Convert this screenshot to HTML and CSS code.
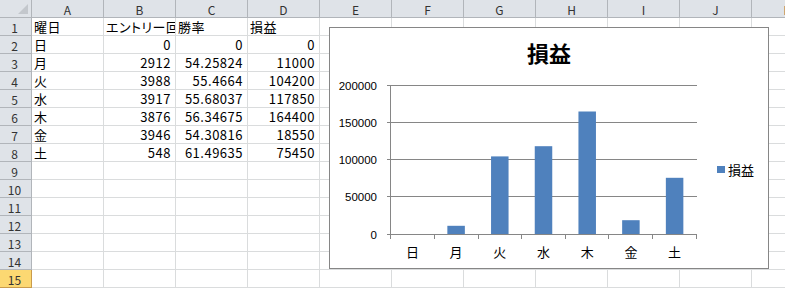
FILE: index.html
```html
<!DOCTYPE html>
<html lang="ja">
  <head>
    <meta charset="UTF-8" />
    <meta name="viewport" content="width=device-width, initial-scale=1.0" />
    <title>損益</title>
    <link rel="stylesheet" href="styles.css">
  </head>
  <body>
    <div class="sheet" id="sheet"></div>

    <div class="chart">
      <div class="chart-title">損益</div>
      <div class="chart-body">
        <svg class="plot" width="375" height="202" viewBox="0 0 375 202">
          <g class="grid">
            <line x1="57" y1="20.5" x2="367" y2="20.5" />
            <line x1="57" y1="57.5" x2="367" y2="57.5" />
            <line x1="57" y1="94.5" x2="367" y2="94.5" />
            <line x1="57" y1="131.5" x2="367" y2="131.5" />
          </g>
          <g class="axis-y">
            <text x="47" y="25">200000</text>
            <text x="47" y="62">150000</text>
            <text x="47" y="99">100000</text>
            <text x="47" y="136">50000</text>
            <text x="47" y="173.5">0</text>
          </g>
          <g class="bars">
            <rect x="117.35" y="160.8" width="17.5" height="8.2" />
            <rect x="161.05" y="91.4" width="17.5" height="77.6" />
            <rect x="204.75" y="81.2" width="17.5" height="87.8" />
            <rect x="248.45" y="46.5" width="17.5" height="122.5" />
            <rect x="292.15" y="155.2" width="17.5" height="13.8" />
            <rect x="335.85" y="112.8" width="17.5" height="56.2" />
          </g>
          <g class="axis">
            <line x1="57" y1="169.5" x2="367" y2="169.5" />
            <line x1="60.5" y1="20" x2="60.5" y2="174" />
            <line x1="104.5" y1="169" x2="104.5" y2="174" />
            <line x1="148.5" y1="169" x2="148.5" y2="174" />
            <line x1="191.5" y1="169" x2="191.5" y2="174" />
            <line x1="235.5" y1="169" x2="235.5" y2="174" />
            <line x1="278.5" y1="169" x2="278.5" y2="174" />
            <line x1="322.5" y1="169" x2="322.5" y2="174" />
            <line x1="366.5" y1="169" x2="366.5" y2="174" />
          </g>
          <g class="axis-x">
            <text x="82.4" y="191.5">日</text>
            <text x="126.1" y="191.5">月</text>
            <text x="169.8" y="191.5">火</text>
            <text x="213.5" y="191.5">水</text>
            <text x="257.2" y="191.5">木</text>
            <text x="300.9" y="191.5">金</text>
            <text x="344.6" y="191.5">土</text>
          </g>
        </svg>
        <div class="legend">
          <span class="legend-key"></span>損益
        </div>
      </div>
    </div>

    <script>
      // 表のデータ（1行目は見出し）
      const rows = [
        ["曜日", "エントリー回数", "勝率", "損益"],
        ["日", 0, 0, 0],
        ["月", 2912, 54.25824, 11000],
        ["火", 3988, 55.4664, 104200],
        ["水", 3917, 55.68037, 117850],
        ["木", 3876, 56.34675, 164400],
        ["金", 3946, 54.30816, 18550],
        ["土", 548, 61.49635, 75450],
      ];
      const columns = ["A", "B", "C", "D", "E", "F", "G", "H", "I", "J", "K"];
      const rowCount = 15;
      const activeRow = 15;

      const sheet = document.querySelector("#sheet");
      let html = `<div class="head corner"></div>`;
      columns.forEach((col) => {
        html += `<div class="head col-head">${col}</div>`;
      });

      for (let r = 1; r <= rowCount; r++) {
        const cls = r === activeRow ? "head row-head active" : "head row-head";
        html += `<div class="${cls}">${r}</div>`;
        const data = rows[r - 1] || [];
        columns.forEach((col, c) => {
          const value = data[c];
          if (value === undefined) {
            html += `<div class="cell"></div>`;
          } else if (typeof value === "number") {
            html += `<div class="cell num">${value}</div>`;
          } else {
            html += `<div class="cell">${value}</div>`;
          }
        });
      }
      sheet.innerHTML = html;
    </script>
  </body>
</html>
```

FILE: styles.css
```css
body {
  margin: 0;
  width: 785px;
  height: 288px;
  overflow: hidden;
  position: relative;
  background-color: white;
  font-family: "Noto Sans CJK JP", "Noto Sans", sans-serif;
  color: #000;
}

.sheet {
  display: grid;
  grid-template-columns: 32px repeat(11, 72px);
  grid-auto-rows: 18px;
}

.cell,
.head {
  box-sizing: border-box;
  overflow: hidden;
  white-space: nowrap;
}

.cell {
  border-right: 1px solid #dadcdd;
  border-bottom: 1px solid #dadcdd;
  padding: 0 2px;
  font-size: 13px;
  line-height: 17px;
  letter-spacing: 0.5px;
  font-feature-settings: "palt";
}

.cell.num {
  text-align: right;
  padding-right: 4px;
}

.head {
  background-color: #dfe3e8;
  border-right: 1px solid #b1b5ba;
  border-bottom: 1px solid #b1b5ba;
  color: #333;
  font-size: 12px;
  line-height: 15px;
  padding-top: 2px;
  text-align: center;
}

.row-head {
  padding-right: 2px;
}

.row-head.active {
  background-color: #fcd872;
  border-color: #c99b4c;
  border-right: 1px solid #c99b4c;
}

.corner {
  position: relative;
}

.corner::after {
  content: "";
  position: absolute;
  right: 3px;
  bottom: 3px;
  width: 10px;
  height: 10px;
  background-color: #c3c7cc;
  clip-path: polygon(100% 0, 100% 100%, 0 100%);
}

.chart {
  position: absolute;
  left: 329px;
  top: 27px;
  width: 440px;
  height: 242px;
  box-sizing: border-box;
  border: 1px solid #868686;
  background-color: white;
}

.chart-title {
  padding-top: 12px;
  line-height: 25px;
  font-size: 22px;
  font-weight: bold;
  text-align: center;
}

.chart-body {
  display: flex;
}

.plot {
  display: block;
  flex: none;
}

.plot line {
  stroke: #868686;
  stroke-width: 1;
}

.plot .bars rect {
  fill: #4f81bd;
}

.axis-y text {
  font-family: "Liberation Sans", Arial, sans-serif;
  font-size: 11.5px;
  text-anchor: end;
}

.axis-x text {
  font-size: 13px;
  text-anchor: middle;
}

.legend {
  display: flex;
  align-items: center;
  margin-top: 96px;
  padding-left: 12px;
  height: 16px;
  font-size: 13px;
}

.legend-key {
  width: 8px;
  height: 7px;
  margin-right: 3px;
  background-color: #4f81bd;
}
```
